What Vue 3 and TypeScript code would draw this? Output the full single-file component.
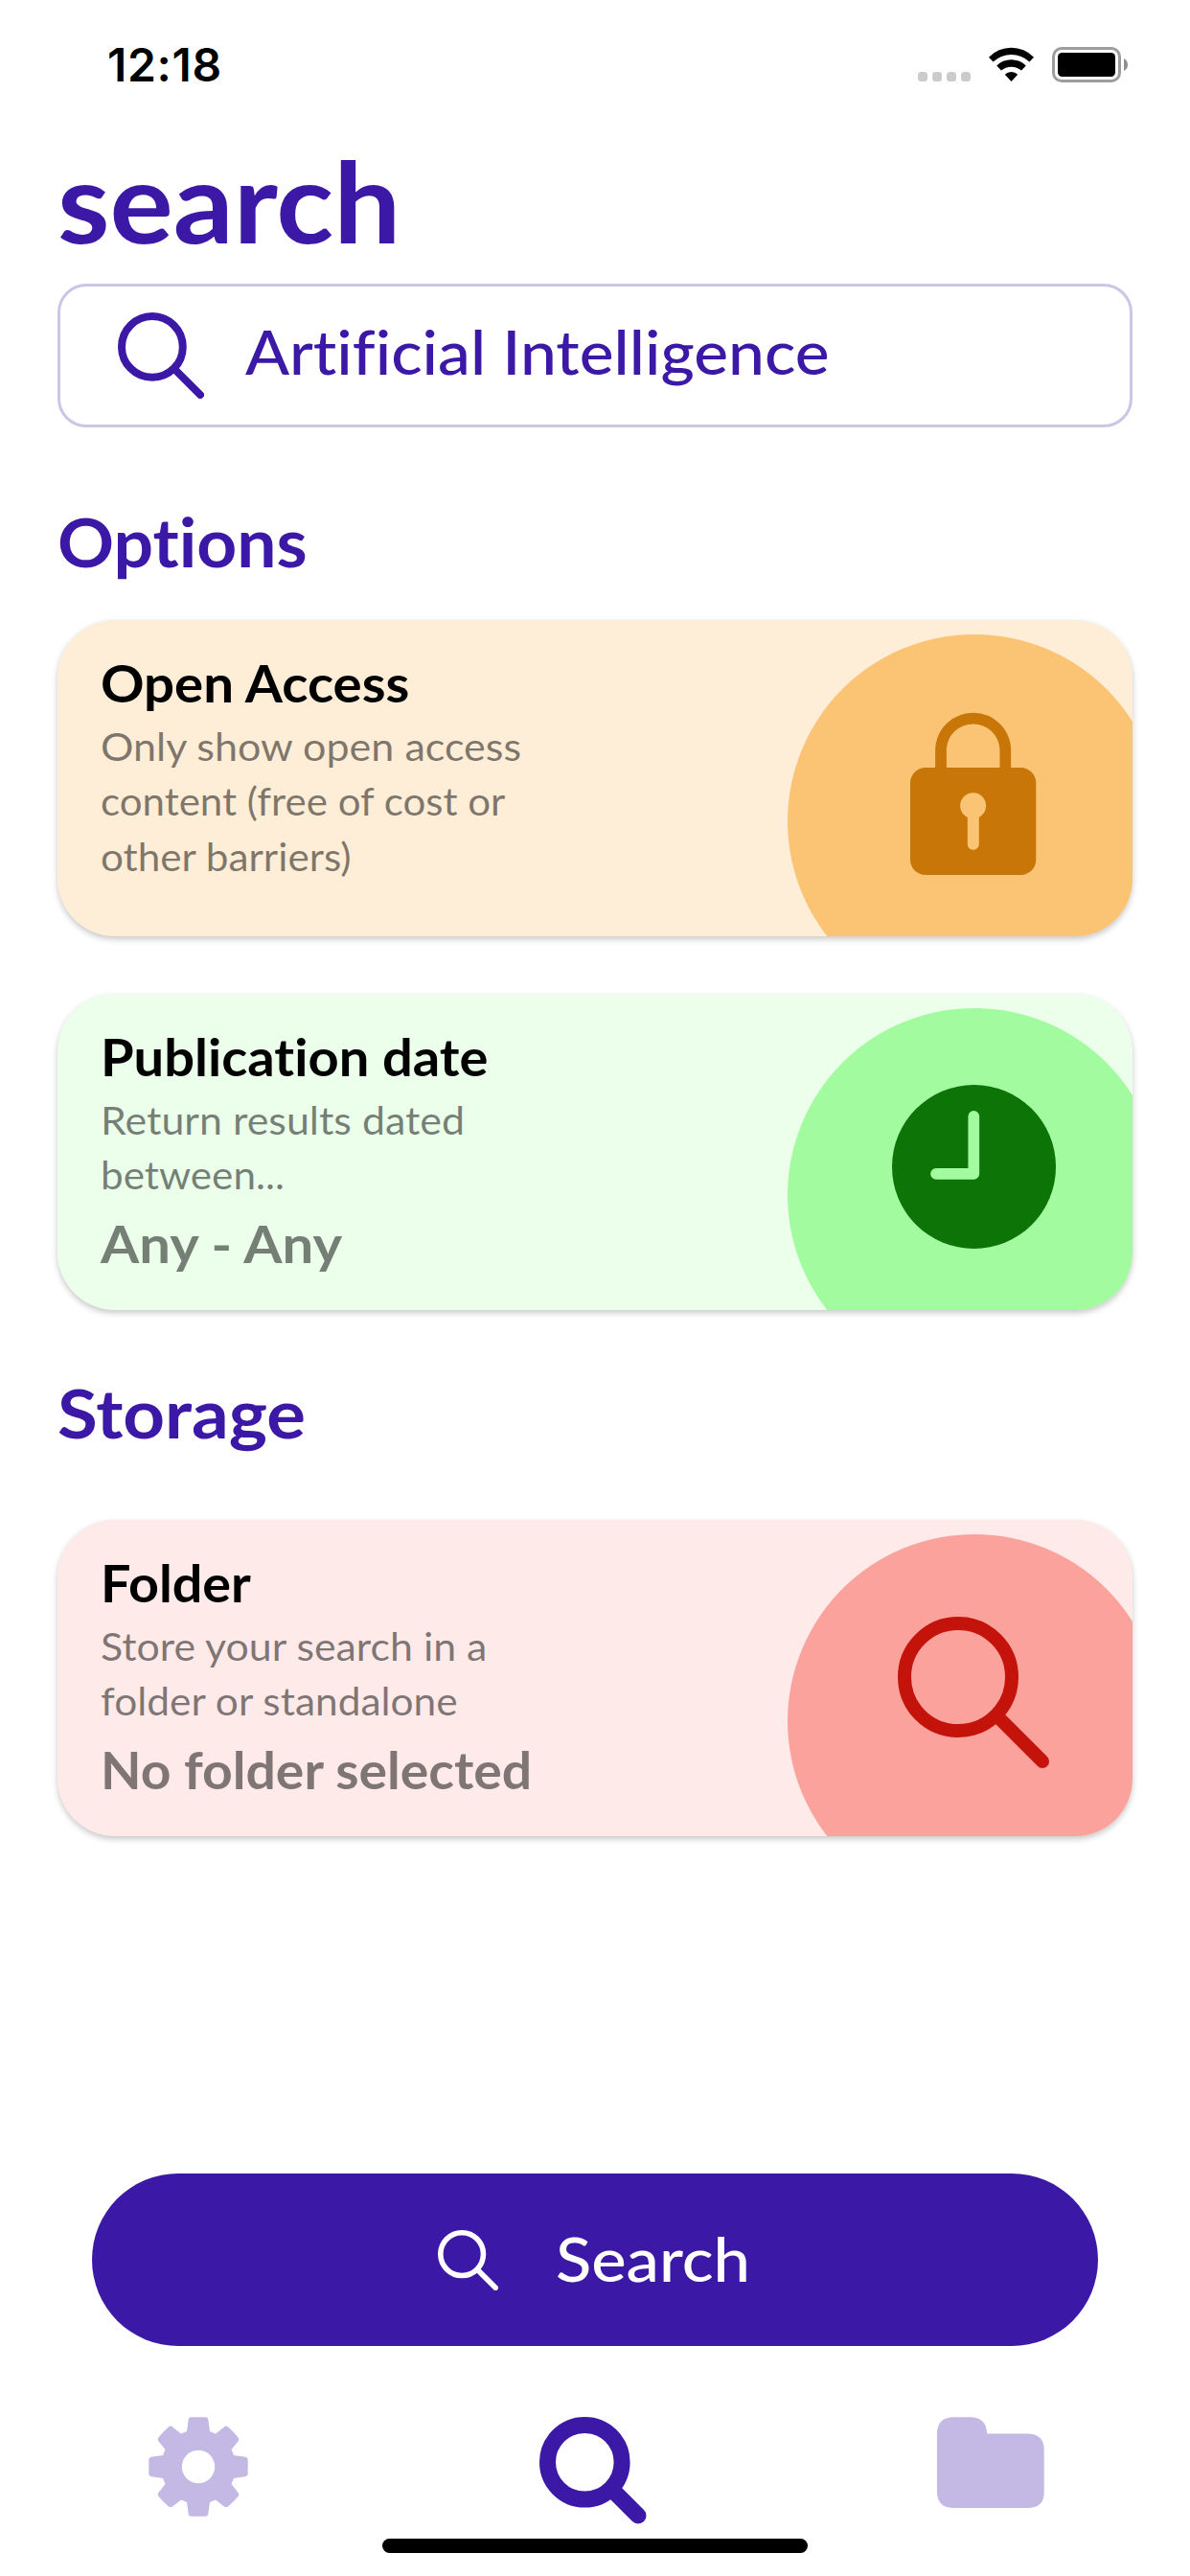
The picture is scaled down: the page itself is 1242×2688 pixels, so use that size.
<script setup lang="ts">
interface Line {
  text: string
  stretch: number
}

interface OptionCard {
  tone: string
  icon: 'lock' | 'clock' | 'search'
  title: Line
  lines: Line[]
  value?: Line
}

const options: OptionCard[] = [
  {
    tone: 'orange',
    icon: 'lock',
    title: { text: 'Open Access', stretch: 1.064 },
    lines: [
      { text: 'Only show open access', stretch: 1.05 },
      { text: 'content (free of cost or', stretch: 1.025 },
      { text: 'other barriers)', stretch: 1.03 },
    ],
  },
  {
    tone: 'green',
    icon: 'clock',
    title: { text: 'Publication date', stretch: 1.058 },
    lines: [
      { text: 'Return results dated', stretch: 1.047 },
      { text: 'between...', stretch: 1.03 },
    ],
    value: { text: 'Any - Any', stretch: 1.095 },
  },
]

const storage: OptionCard[] = [
  {
    tone: 'red',
    icon: 'search',
    title: { text: 'Folder', stretch: 1.05 },
    lines: [
      { text: 'Store your search in a', stretch: 1.045 },
      { text: 'folder or standalone', stretch: 1.035 },
    ],
    value: { text: 'No folder selected', stretch: 1.043 },
  },
]

const sections = [
  { heading: 'Options', stretch: 1.045, cards: options },
  { heading: 'Storage', stretch: 1.09, cards: storage },
]

// Widens the letterforms a little from their left edge.
const widen = (n: number) => ({ transform: `scaleX(${n})` })
</script>

<template>
  <div class="screen">
    <svg width="0" height="0" class="defs">
      <symbol id="magnifier" viewBox="0 0 158 158">
        <g fill="none" stroke="currentColor" stroke-width="14" stroke-linecap="round">
          <circle cx="63" cy="63" r="56" />
          <path d="M104 104 151 151" />
        </g>
      </symbol>
    </svg>

    <header class="status">
      <span class="time">12:18</span>
      <svg class="indicators" width="220" height="40" viewBox="958 47 220 40">
        <g fill="#cbcbcb">
          <rect v-for="x in [958, 973, 988, 1003]" :key="x" :x="x" y="75" width="10" height="10" rx="3.6" />
        </g>
        <path d="M1032 59.7A32.5 32.5 0 0 1 1079 59.7L1074.5 64.6A27.8 27.8 0 0 0 1036.5 64.6Z" />
        <path d="M1040.2 68.5A21.7 21.7 0 0 1 1070.8 68.5L1066 73.5A16.4 16.4 0 0 0 1045 73.5Z" />
        <path d="M1048.8 77.8A9.5 9.5 0 0 1 1062.2 77.8L1055.5 85Z" />
        <rect x="1099.5" y="50.5" width="69" height="34" rx="8.5" fill="none" stroke="#9d9d9d" stroke-width="3" />
        <rect x="1104" y="55" width="60" height="25" rx="4.5" />
        <path d="M1173 61Q1177 63 1177 67.5Q1177 72 1173 74Z" fill="#8f8f8f" />
      </svg>
    </header>

    <main>
      <h1 class="wide" :style="widen(1.07)">search</h1>
      <div class="field">
        <svg class="field-icon"><use href="#magnifier" /></svg>
        <span class="query wide" :style="widen(1.05)">Artificial Intelligence</span>
      </div>

      <section v-for="s in sections" :key="s.heading" :class="s.heading.toLowerCase()">
        <h2 class="wide" :style="widen(s.stretch)">{{ s.heading }}</h2>
        <div class="cards">
          <article v-for="c in s.cards" :key="c.title.text" class="card" :class="c.tone">
            <div class="copy">
              <h3 class="wide" :style="widen(c.title.stretch)">{{ c.title.text }}</h3>
              <p>
                <span v-for="l in c.lines" :key="l.text" class="wide" :style="widen(l.stretch)">{{ l.text }}</span>
              </p>
              <strong v-if="c.value" class="wide" :style="widen(c.value.stretch)">{{ c.value.text }}</strong>
            </div>
            <svg class="art" width="360" height="330" viewBox="822 0 360 330">
              <circle class="disc" cx="1017" cy="210" r="195" />
              <g v-if="c.icon === 'lock'">
                <path class="line" stroke-width="11.7" d="M982 158V134.500A33.7 33.7 0 0 1 1049.3 134.500V158" />
                <rect class="solid" x="950" y="154" width="131.3" height="112" rx="16" />
                <circle class="disc" cx="1015.6" cy="193.7" r="13.5" />
                <rect class="disc" x="1009.8" y="196" width="12" height="43.7" rx="5.5" />
              </g>
              <g v-else-if="c.icon === 'clock'">
                <circle class="solid" cx="1016.5" cy="180.5" r="85.5" />
                <path class="hands" d="M1016.3 127.800V187.900H977" />
              </g>
              <use v-else href="#magnifier" x="937" y="101" width="158" height="158" class="glyph" />
            </svg>
          </article>
        </div>
      </section>
    </main>

    <button class="submit" type="button">
      <svg class="submit-icon"><use href="#magnifier" /></svg>
      <span class="wide" :style="widen(1.065)">Search</span>
    </button>

    <nav>
      <svg width="104" height="104" viewBox="-52 -52 104 104" class="muted">
        <path fill-rule="evenodd" d="M-12 -37 -10.300 -49Q-10 -51.800 -7.500 -51.800H7.500Q10 -51.800 10.300 -49L12 -37 18 -34.500 27 -41.500Q29 -43.300 31 -41.500Q37 -36.500 41.500 -30.500Q43 -28.500 41.500 -26.500L34.500 -18 37 -12 49 -10.300Q51.700 -9.800 51.700 -7.500V7.500Q51.700 9.800 49 10.300L37 12 34.500 18 41.500 27Q43 29 41.500 31Q37 36.500 31 41.500Q29 43 27 41.500L18 34.500 12 37 10.300 49Q10 51.800 7.500 51.800H-7.500Q-10 51.800 -10.300 49L-12 37 -18 34.500 -27 41.500Q-29 43 -31 41.500Q-37 36.500 -41.500 31Q-43 29 -41.500 27L-34.500 18 -37 12 -49 10.300Q-51.700 9.800 -51.700 7.500V-7.500Q-51.700 -9.800 -49 -10.300L-37 -12 -34.500 -18 -41.500 -26.500Q-43 -28.500 -41.500 -30.500Q-37 -36.500 -31 -41.500Q-29 -43.300 -27 -41.500L-18 -34.500ZM0 -17.200A17.200 17.200 0 1 0 0 17.200A17.200 17.200 0 1 0 0 -17.200Z" />
      </svg>
      <svg width="112" height="112" viewBox="0 0 112 112" class="active">
        <circle cx="47.300" cy="47.300" r="38.800" />
        <path d="M76 76 103 103" />
      </svg>
      <svg width="112" height="112" viewBox="0 0 112 112" class="muted">
        <path d="M16 0.300H36Q51 1 52 16V17.600H96Q111 18.600 111.700 33V80Q111 94 96 95H16Q1 94 0 80V16Q1 1 16 0.300Z" />
      </svg>
    </nav>
    <div class="home"></div>
  </div>
</template>

<style>
body {
  margin: 0;
  background: #fff;
}
</style>

<style scoped>
.screen {
  width: 1242px;
  height: 2688px;
  display: flex;
  flex-direction: column;
  align-items: center;
  overflow: hidden;
  background: #fff;
  color: #000;
  font-family: Lato, "Open Sans", sans-serif;
  font-variant-ligatures: none;
}
.wide {
  transform-origin: 0 50%;
}
.defs {
  display: block;
}
.status {
  width: 100%;
  height: 140px;
  box-sizing: border-box;
  padding: 39px 64px 0 112px;
  display: flex;
  justify-content: space-between;
  align-items: flex-start;
}
.time {
  font: 600 48px/58px Inter, sans-serif;
  letter-spacing: 0.7px;
}
.indicators {
  margin-top: 8px;
}
main {
  width: 1122px;
}
h1, h2, h3, p {
  margin: 0;
}
h1, h2, .field, .active {
  color: #3c18a7;
}
h1 {
  font-size: 116px;
  line-height: 140px;
}
.field {
  box-sizing: border-box;
  height: 150px;
  margin-top: 16px;
  border: 3px solid #cac6e6;
  border-radius: 30px;
  padding-left: 60px;
  display: flex;
  align-items: center;
}
.field-icon {
  width: 90px;
  height: 90px;
}
.query {
  margin-left: 43px;
  padding-bottom: 11px;
  font-size: 64.5px;
  font-weight: 500;
}
h2 {
  font-size: 70px;
  line-height: 90px;
}
.options {
  padding-top: 74px;
}
.options .cards {
  margin-top: 37px;
}
.storage {
  padding-top: 62px;
}
.storage .cards {
  margin-top: 67px;
}
.cards {
  display: flex;
  flex-direction: column;
  gap: 60px;
}
.card {
  height: 330px;
  border-radius: 60px;
  overflow: hidden;
  display: flex;
  justify-content: space-between;
  box-shadow: 0 3px 6px rgba(0, 0, 0, 0.22);
}
.copy {
  padding: 36px 0 0 45px;
  white-space: nowrap;
}
h3, strong {
  display: block;
  font-size: 53px;
  line-height: 60px;
  font-weight: 700;
}
p {
  margin-top: 7px;
  font-size: 41px;
  line-height: 57.3px;
}
p span {
  display: block;
}
p, strong {
  color: rgba(0, 0, 0, 0.5);
}
strong {
  margin-top: 13px;
}
.orange { background: #feedd7; --disc: #fbc475; --ink: #c77607; }
.green { background: #ebffeb; --disc: #a3fb9f; --ink: #0d7407; }
.red { background: #feebe9; --disc: #fba29d; --ink: #c3130a; }
.disc { fill: var(--disc); }
.solid { fill: var(--ink); }
.glyph { color: var(--ink); }
.line { fill: none; stroke: var(--ink); }
.hands {
  fill: none;
  stroke: var(--disc);
  stroke-width: 11.7;
  stroke-linecap: round;
  stroke-linejoin: round;
}
.submit {
  width: 1050px;
  height: 180px;
  flex: none;
  margin-top: 352px;
  border: 0;
  border-radius: 90px;
  padding: 0 0 0 361px;
  background: #3c18a7;
  color: #fff;
  font: 500 64.5px/78px Lato, "Open Sans", sans-serif;
  display: flex;
  align-items: center;
}
.submit span {
  padding-bottom: 5px;
}
.submit-icon {
  width: 63px;
  height: 63px;
  margin-right: 60px;
}
nav {
  width: 100%;
  box-sizing: border-box;
  height: 127px;
  margin-top: 74px;
  padding: 0 152px 0 155px;
  display: flex;
  justify-content: space-between;
}
.muted {
  fill: #c4b9e4;
}
.active {
  fill: none;
  stroke: currentColor;
  stroke-width: 17;
  stroke-linecap: round;
}
.home {
  width: 444px;
  height: 15px;
  border-radius: 8px;
  background: #000;
}
</style>
